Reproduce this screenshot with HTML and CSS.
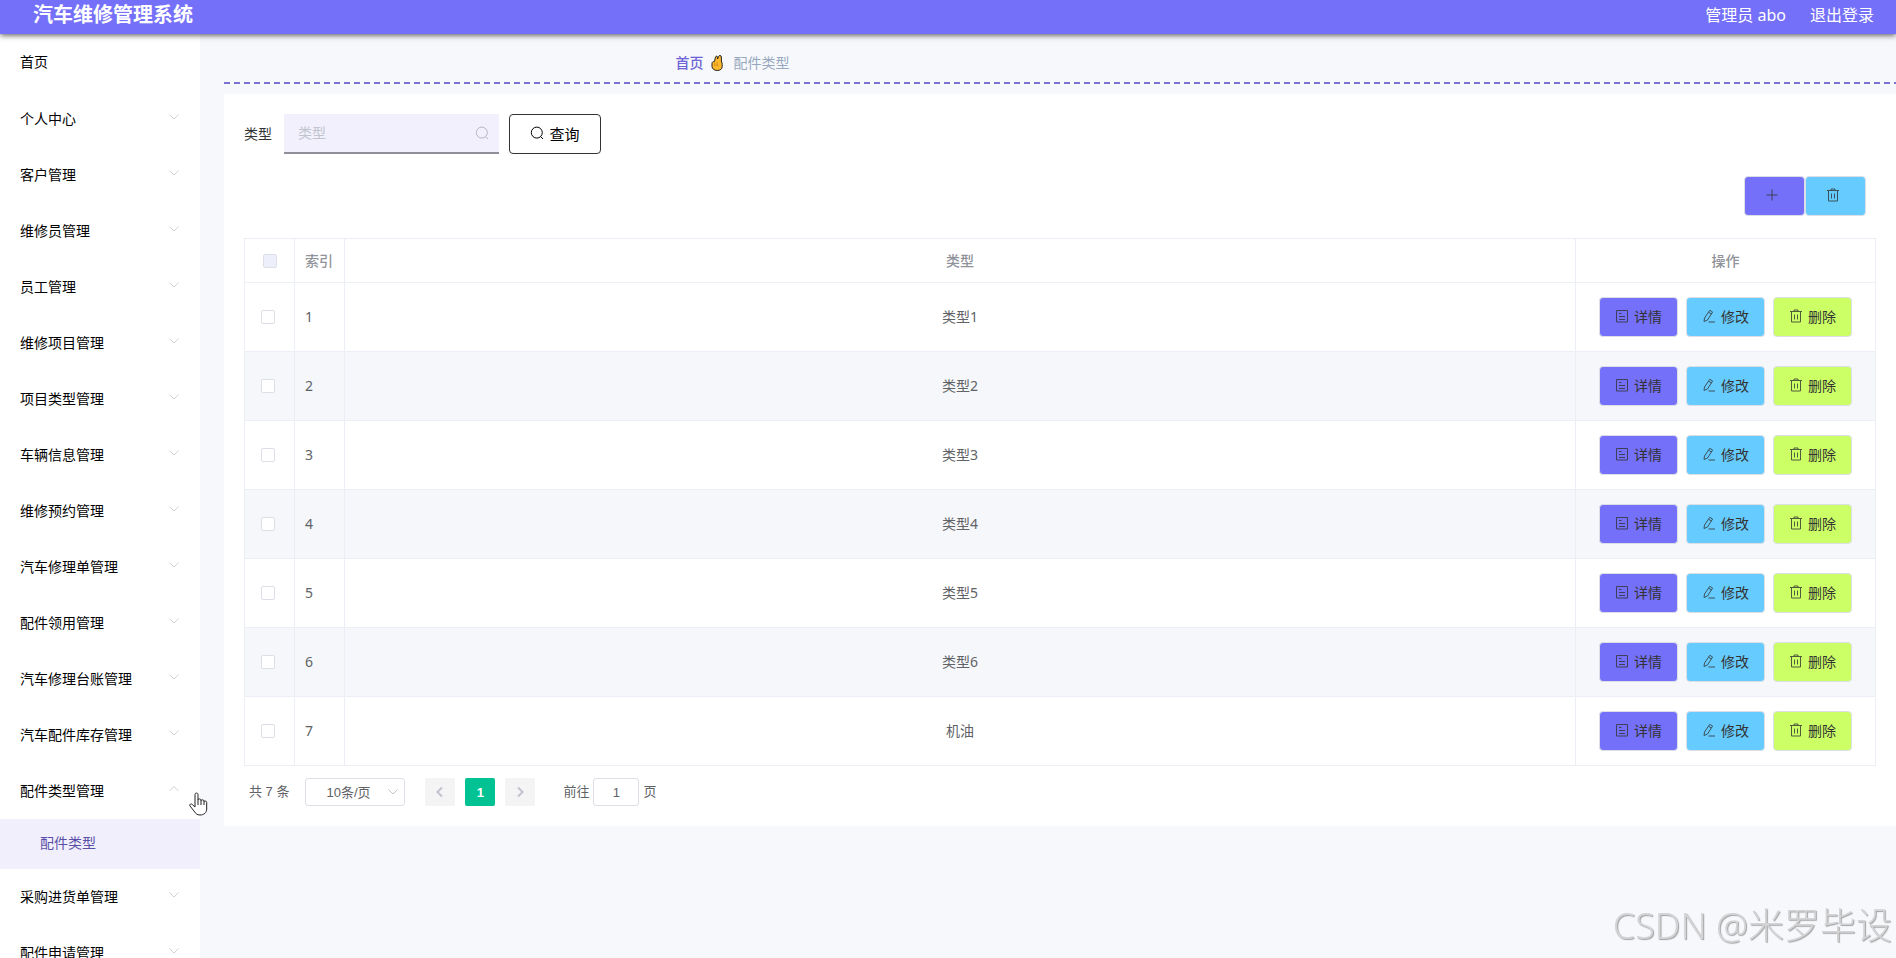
FILE: index.html
```
<!DOCTYPE html>
<html lang="zh-CN">

<head>
  <meta charset="UTF-8">
  <title>汽车维修管理系统</title>
  <link rel="stylesheet" href="styles.css">
</head>

<body>

  <!-- shared icons -->
  <svg class="icon-defs" aria-hidden="true">
    <symbol id="icon-down" viewBox="0 0 14 14">
      <path d="M2.500 4.500 7 9l4.500-4.500" />
    </symbol>
    <symbol id="icon-up" viewBox="0 0 14 14">
      <path d="M2.500 9 7 4.500 11.500 9" />
    </symbol>
    <symbol id="icon-left" viewBox="0 0 14 14">
      <path d="M9 2.500 4.500 7 9 11.500" />
    </symbol>
    <symbol id="icon-right" viewBox="0 0 14 14">
      <path d="M5 2.500 9.500 7 5 11.500" />
    </symbol>
    <symbol id="icon-search" viewBox="0 0 14 14">
      <circle cx="6.800" cy="6.600" r="5.500" />
      <path d="M10.600 10.600 13 13" />
    </symbol>
    <symbol id="icon-plus" viewBox="0 0 14 14">
      <path d="M7 1.500v11M1.500 7h11" />
    </symbol>
    <symbol id="icon-trash" viewBox="0 0 14 14">
      <path d="M1 2.500h12M2.500 2.500v10.500h9V2.500M5 2.500v-1.500h4v1.500M5.500 5.500v5M8.500 5.500v5" />
    </symbol>
    <symbol id="icon-doc" viewBox="0 0 14 14">
      <path d="M1.500 1.500h11v11.500h-11zM4 4.500h2.500M4 7.500h6M4 10.500h6" />
    </symbol>
    <symbol id="icon-edit" viewBox="0 0 14 14">
      <path d="M7.800 1.300 10.600 3 5.500 11 2 12.500l.5-3.500zM6.600 3.200 9.400 5M6.500 13h6.500" />
    </symbol>
  </svg>

  <header class="navbar">
    <h1 class="navbar-title">汽车维修管理系统</h1>
    <div class="navbar-user">
      <span>管理员 abo</span>
      <a href="#">退出登录</a>
    </div>
  </header>

  <div class="container">
    <nav class="sidebar">
      <ul class="menu" id="menu">
        <li><a class="menu-item menu-home" href="#">首页</a></li>
      </ul>
    </nav>

    <main class="main">
      <div class="breadcrumb">
        <a href="#">首页</a>
        <svg class="hand" viewBox="0 0 12 16" aria-hidden="true">
          <path d="M1 8.500C1 7 2 6.500 3.500 6.500L4.500 2C5 .7 6.500 1 6.500 2.200V4l1-2.500C8-.1 10.500.2 10.300 2L10.500 7c.7.800.7 1.500.7 2.500v2c0 2.500-2 4-5 4S1 13.500 1 11.500z" />
          <path class="hand-fold" d="M3.500 7.500v3M6.200 7v3.500M3.500 10l4 .5" />
        </svg>
        <span>配件类型</span>
      </div>

      <section class="card">
        <form class="search-form">
          <label for="typeInput">类型</label>
          <div class="search-input">
            <input type="text" id="typeInput" placeholder="类型">
            <svg class="icon"><use href="#icon-search" /></svg>
          </div>
          <button type="button" class="search-btn">
            <svg class="icon"><use href="#icon-search" /></svg>查询
          </button>
        </form>

        <div class="actions">
          <button type="button" class="btn btn-purple" aria-label="新增"><svg class="icon"><use href="#icon-plus" /></svg></button>
          <button type="button" class="btn btn-blue" aria-label="删除"><svg class="icon"><use href="#icon-trash" /></svg></button>
        </div>

        <table class="table">
          <colgroup>
            <col class="col-small">
            <col class="col-small">
            <col>
            <col class="col-actions">
          </colgroup>
          <thead>
            <tr>
              <th class="check"><input type="checkbox" aria-label="全选" disabled></th>
              <th class="index">索引</th>
              <th>类型</th>
              <th>操作</th>
            </tr>
          </thead>
          <tbody id="rows"></tbody>
        </table>

        <div class="pagination">
          <span class="total">共 7 条</span>
          <div class="page-size">
            <select aria-label="每页条数">
              <option>10条/页</option>
              <option>20条/页</option>
              <option>50条/页</option>
            </select>
            <svg class="icon"><use href="#icon-down" /></svg>
          </div>
          <button type="button" class="page-btn" aria-label="上一页" disabled><svg class="icon"><use href="#icon-left" /></svg></button>
          <button type="button" class="page-btn active">1</button>
          <button type="button" class="page-btn" aria-label="下一页" disabled><svg class="icon"><use href="#icon-right" /></svg></button>
          <div class="jump">
            <label for="pageInput">前往</label>
            <input type="text" id="pageInput" value="1">
            <span>页</span>
          </div>
        </div>
      </section>
    </main>
  </div>

  <svg class="pointer" viewBox="0 0 20 24" aria-hidden="true">
    <path d="M7 15V2.500c0-2 3-2 3 0V8c0-1.500 3-1.500 3 .3v.5c0-1.400 3-1.300 3 .4v.6c0-1.300 2.700-1.100 2.700.6V17c0 3.500-2.700 6-6.700 6-3 0-4.500-1.500-6-4l-4-5c-1-1.500 1-2.800 2.300-1.500zM10 8v5M13 8.500V13M16 9.500V13" />
  </svg>
  <div class="watermark">CSDN @米罗毕设</div>

  <script>
    const menus = [
      '个人中心', '客户管理', '维修员管理', '员工管理', '维修项目管理',
      '项目类型管理', '车辆信息管理', '维修预约管理', '汽车修理单管理', '配件领用管理',
      '汽车修理台账管理', '汽车配件库存管理', '配件类型管理', '采购进货单管理', '配件申请管理'
    ];
    const opened = '配件类型管理';
    const types = ['类型1', '类型2', '类型3', '类型4', '类型5', '类型6', '机油'];

    const icon = (name) => `<svg class="icon"><use href="#icon-${name}" /></svg>`;

    document.getElementById('menu').innerHTML += menus.map((name) => {
      const isOpen = name === opened;
      const sub = isOpen ? '<a class="submenu-item" href="#">配件类型</a>' : '';
      return `<li><a class="menu-item" href="#">${name}${icon(isOpen ? 'up' : 'down')}</a>${sub}</li>`;
    }).join('');

    document.getElementById('rows').innerHTML = types.map((type, i) => `
      <tr>
        <td class="check"><input type="checkbox" aria-label="选择${type}"></td>
        <td class="index">${i + 1}</td>
        <td>${type}</td>
        <td>
          <div class="row-actions">
            <button type="button" class="btn btn-purple">${icon('doc')}详情</button>
            <button type="button" class="btn btn-blue">${icon('edit')}修改</button>
            <button type="button" class="btn btn-green">${icon('trash')}删除</button>
          </div>
        </td>
      </tr>`).join('');
  </script>

</body>

</html>
```
FILE: styles.css
```
* {
  box-sizing: border-box;
}

body {
  margin: 0;
  height: 100vh;
  overflow: hidden;
  display: flex;
  flex-direction: column;
  font-family: "Noto Sans", "Noto Sans CJK SC", sans-serif;
  font-size: 14px;
  line-height: 20px;
  color: #606266;
  background-color: #f7f8fb;
}

a {
  color: inherit;
  text-decoration: none;
}

button,
input,
select {
  font-family: inherit;
  font-size: 14px;
}

button {
  cursor: pointer;
}

.icon-defs {
  position: absolute;
  width: 0;
  height: 0;
}

.icon {
  width: 14px;
  height: 14px;
  flex: none;
  fill: none;
  stroke: currentColor;
  stroke-width: 1;
}

/* top bar */
.navbar {
  position: relative;
  z-index: 1;
  flex: none;
  display: flex;
  justify-content: space-between;
  height: 34px;
  padding: 0 22px 4px 33px;
  align-items: center;
  color: #fff;
  background-color: #7570f9;
  box-shadow: 0 1px 6px rgba(0, 0, 0, 0.7);
}

.navbar-title {
  margin: 0;
  font-size: 20px;
  line-height: 28px;
}

.navbar-user {
  display: flex;
  gap: 24px;
  font-size: 16px;
}

.container {
  flex: 1;
  display: flex;
  min-height: 0;
}

/* sidebar */
.sidebar {
  flex: none;
  width: 200px;
  overflow: hidden;
  background-color: #fff;
}

.menu {
  margin: 0;
  padding: 0;
  list-style: none;
}

.menu-item {
  display: flex;
  align-items: center;
  justify-content: space-between;
  height: 56px;
  padding: 0 19px 0 20px;
  color: #000;
}

.menu-home {
  height: 57px;
  padding-bottom: 2px;
}

.menu-item .icon {
  color: #d0d0d4;
  margin-bottom: 4px;
}

.submenu-item {
  display: block;
  padding: 0 40px 2px;
  line-height: 48px;
  color: #5a4fa8;
  background-color: #f1effb;
}

/* content */
.main {
  flex: 1;
  min-width: 0;
  padding-left: 24px;
}

.breadcrumb {
  display: flex;
  align-items: center;
  height: 50px;
  padding: 8px 0 0 27%;
  color: #97a8be;
  background: repeating-linear-gradient(90deg, #7b73d3 0 6px, transparent 6px 10px) left bottom / 100% 2px no-repeat;
}

.breadcrumb a {
  font-weight: 500;
  color: #6c63d8;
}

.hand {
  width: 12px;
  height: 16px;
  margin: 0 10px 0 8px;
  fill: #fdb92e;
  stroke: #222;
}

.hand .hand-fold {
  fill: none;
  stroke: #d9901a;
}

.card {
  margin-top: 10px;
  padding: 20px;
  background-color: #fff;
}

.search-form {
  display: flex;
  align-items: center;
  color: #333;
}

.search-input {
  position: relative;
  width: 215px;
  margin: 0 10px 0 12px;
}

.search-input input {
  display: block;
  width: 100%;
  height: 40px;
  padding: 0 30px 2px 14px;
  border: 0;
  border-bottom: 2px solid #8f8e99;
  background-color: #f2f0fd;
}

.search-input input::placeholder {
  color: #c0c4cc;
}

.search-input .icon {
  position: absolute;
  top: 12px;
  right: 10px;
  color: #b4b6c0;
}

.search-btn {
  display: flex;
  align-items: center;
  justify-content: center;
  gap: 5px;
  width: 92px;
  height: 40px;
  padding: 0 0 2px;
  font-size: 15px;
  color: #000;
  border: 1px solid #333;
  border-radius: 4px;
  background-color: #fff;
}

.btn {
  display: flex;
  align-items: center;
  justify-content: center;
  gap: 5px;
  height: 40px;
  padding: 0 0 2px;
  color: #333;
  border: 1px solid #dcdfe6;
  border-radius: 4px;
}

.btn .icon {
  opacity: 0.8;
}

.btn-purple {
  background-color: #7570f9;
}

.btn-blue {
  background-color: #66ccff;
}

.btn-green {
  background-color: #ccff66;
}

.actions {
  display: flex;
  justify-content: flex-end;
  margin: 22px 10px;
}

.actions .btn {
  width: 61px;
  padding-right: 6px;
}

/* table */
.table {
  width: 100%;
  table-layout: fixed;
  border-collapse: collapse;
}

.col-small {
  width: 50px;
}

.col-actions {
  width: 300px;
}

.table th,
.table td {
  padding: 0;
  text-align: center;
  border: 1px solid #ebeef5;
}

.table th {
  height: 44px;
  font-weight: 500;
  color: #909399;
}

.table td {
  height: 69px;
}

.table tbody tr:nth-child(even) {
  background-color: #f5f7fa;
}

.table .index {
  padding-left: 10px;
  text-align: left;
}

.table .check input {
  appearance: none;
  display: block;
  width: 14px;
  height: 14px;
  margin: 0 0 0 16px;
  border: 1px solid #dcdfe6;
  border-radius: 2px;
  background-color: #fff;
}

.table th.check input {
  margin-left: 18px;
  background-color: #edf0fb;
}

.row-actions {
  display: flex;
  justify-content: center;
  gap: 8px;
}

.row-actions .btn {
  width: 79px;
}

/* pagination */
.pagination {
  display: flex;
  align-items: center;
  gap: 10px;
  padding: 12px 5px 0;
  font-family: "Liberation Sans", "Noto Sans CJK SC", sans-serif;
  font-size: 13px;
  line-height: 28px;
}

.pagination select,
.pagination input,
.pagination button {
  font-size: 13px;
}

.page-size {
  position: relative;
  margin: 0 10px 0 6px;
}

.page-size select {
  appearance: none;
  display: block;
  width: 100px;
  height: 28px;
  padding: 0 20px;
  color: #606266;
  border: 1px solid #dcdfe6;
  border-radius: 3px;
  background-color: #fff;
}

.page-size .icon {
  position: absolute;
  top: 7px;
  right: 5px;
  color: #c0c4cc;
}

.page-btn {
  display: flex;
  align-items: center;
  justify-content: center;
  width: 30px;
  height: 28px;
  padding: 0;
  color: #c0c4cc;
  border: 0;
  border-radius: 2px;
  background-color: #f4f4f5;
}

.page-btn .icon {
  stroke-width: 2;
}

.page-btn.active {
  font-weight: bold;
  color: #fff;
  background-color: #00c292;
}

.jump {
  display: flex;
  gap: 4px;
  margin-left: 18px;
}

.jump input {
  width: 46px;
  height: 28px;
  padding: 0;
  text-align: center;
  color: #606266;
  border: 1px solid #dcdfe6;
  border-radius: 3px;
}

.pointer {
  position: absolute;
  top: 792px;
  left: 188px;
  z-index: 2;
  width: 20px;
  height: 24px;
  fill: #fff;
  stroke: #222;
}

.watermark {
  position: fixed;
  right: 4px;
  bottom: 8px;
  font-size: 36px;
  font-weight: 300;
  line-height: 48px;
  color: #d4d4d6;
  text-shadow: 1px 1px 1px #a0a0a0;
}
```
